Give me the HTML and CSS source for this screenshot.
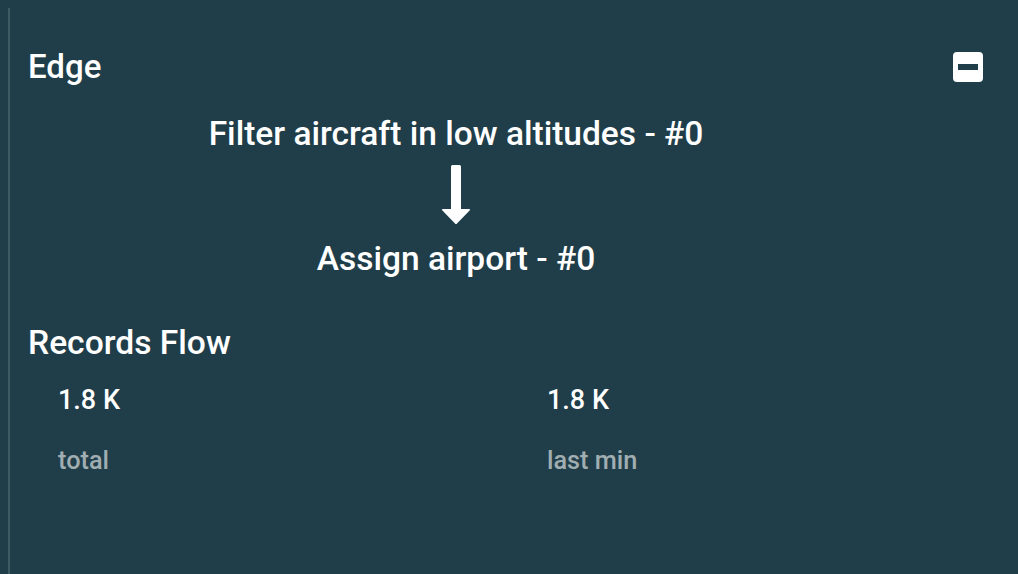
FILE: index.html
```html
<!DOCTYPE html>
<html>
<head>
<meta charset="utf-8">
<link rel="stylesheet" href="styles.css">
</head>
<body>
<div class="panel">
  <div class="header">
    <h1 class="title">Edge</h1>
    <button class="collapse" aria-label="collapse"><span class="bar"></span></button>
  </div>
  <div class="flow">
    <div class="node">Filter aircraft in low altitudes - #0</div>
    <svg class="arrow" width="30" height="60" viewBox="0 0 30 60">
      <path d="M10 1.5 Q10 0 11.5 0 H18.5 Q20 0 20 1.5 V44 H28 Q30 44 28.6 45.6 L16 58.6 Q15 59.6 14 58.6 L1.4 45.6 Q0 44 2 44 H10 Z" fill="#fff"/>
    </svg>
    <div class="node">Assign airport - #0</div>
  </div>
  <h2 class="section">Records Flow</h2>
  <div class="stats">
    <div class="stat">
      <div class="value">1.8 K</div>
      <div class="label">total</div>
    </div>
    <div class="stat">
      <div class="value">1.8 K</div>
      <div class="label">last min</div>
    </div>
  </div>
</div>
</body>
</html>
```
FILE: styles.css
```css
html {
  background: #203e49;
}
body {
  margin: 8px;
  font-family: Roboto, "Liberation Sans", sans-serif;
  font-weight: 500;
  color: #ffffff;
}
.panel {
  border-left: 2px solid #3e5a63;
  min-height: 566px;
  padding-left: 18px;
  box-sizing: border-box;
}
.header {
  display: flex;
  justify-content: space-between;
  align-items: center;
  padding-top: 40px;
  padding-right: 27px;
}
.title {
  margin: 0;
  font-size: 33px;
  font-weight: 500;
  line-height: 38px;
}
.collapse {
  width: 30px;
  height: 30px;
  border: none;
  border-radius: 4px;
  background: #ffffff;
  padding: 0;
  display: flex;
  align-items: center;
  justify-content: center;
}
.collapse .bar {
  width: 20px;
  height: 6px;
  background: #203e49;
}
.flow {
  width: 856px;
  display: flex;
  flex-direction: column;
  align-items: center;
  margin-top: 28px;
}
.node {
  font-size: 33.5px;
  line-height: 40px;
}
.arrow {
  display: block;
  margin: 11px 0 14px;
}
.section {
  margin: 45px 0 0;
  font-size: 33.6px;
  font-weight: 500;
  line-height: 38px;
}
.stats {
  display: grid;
  grid-template-columns: 489px 489px;
  margin-top: 22px;
}
.stat {
  padding-left: 30px;
}
.value {
  font-size: 27px;
  line-height: 32px;
}
.label {
  margin-top: 30px;
  font-size: 25.3px;
  line-height: 30px;
  color: #a0adb1;
}
```
